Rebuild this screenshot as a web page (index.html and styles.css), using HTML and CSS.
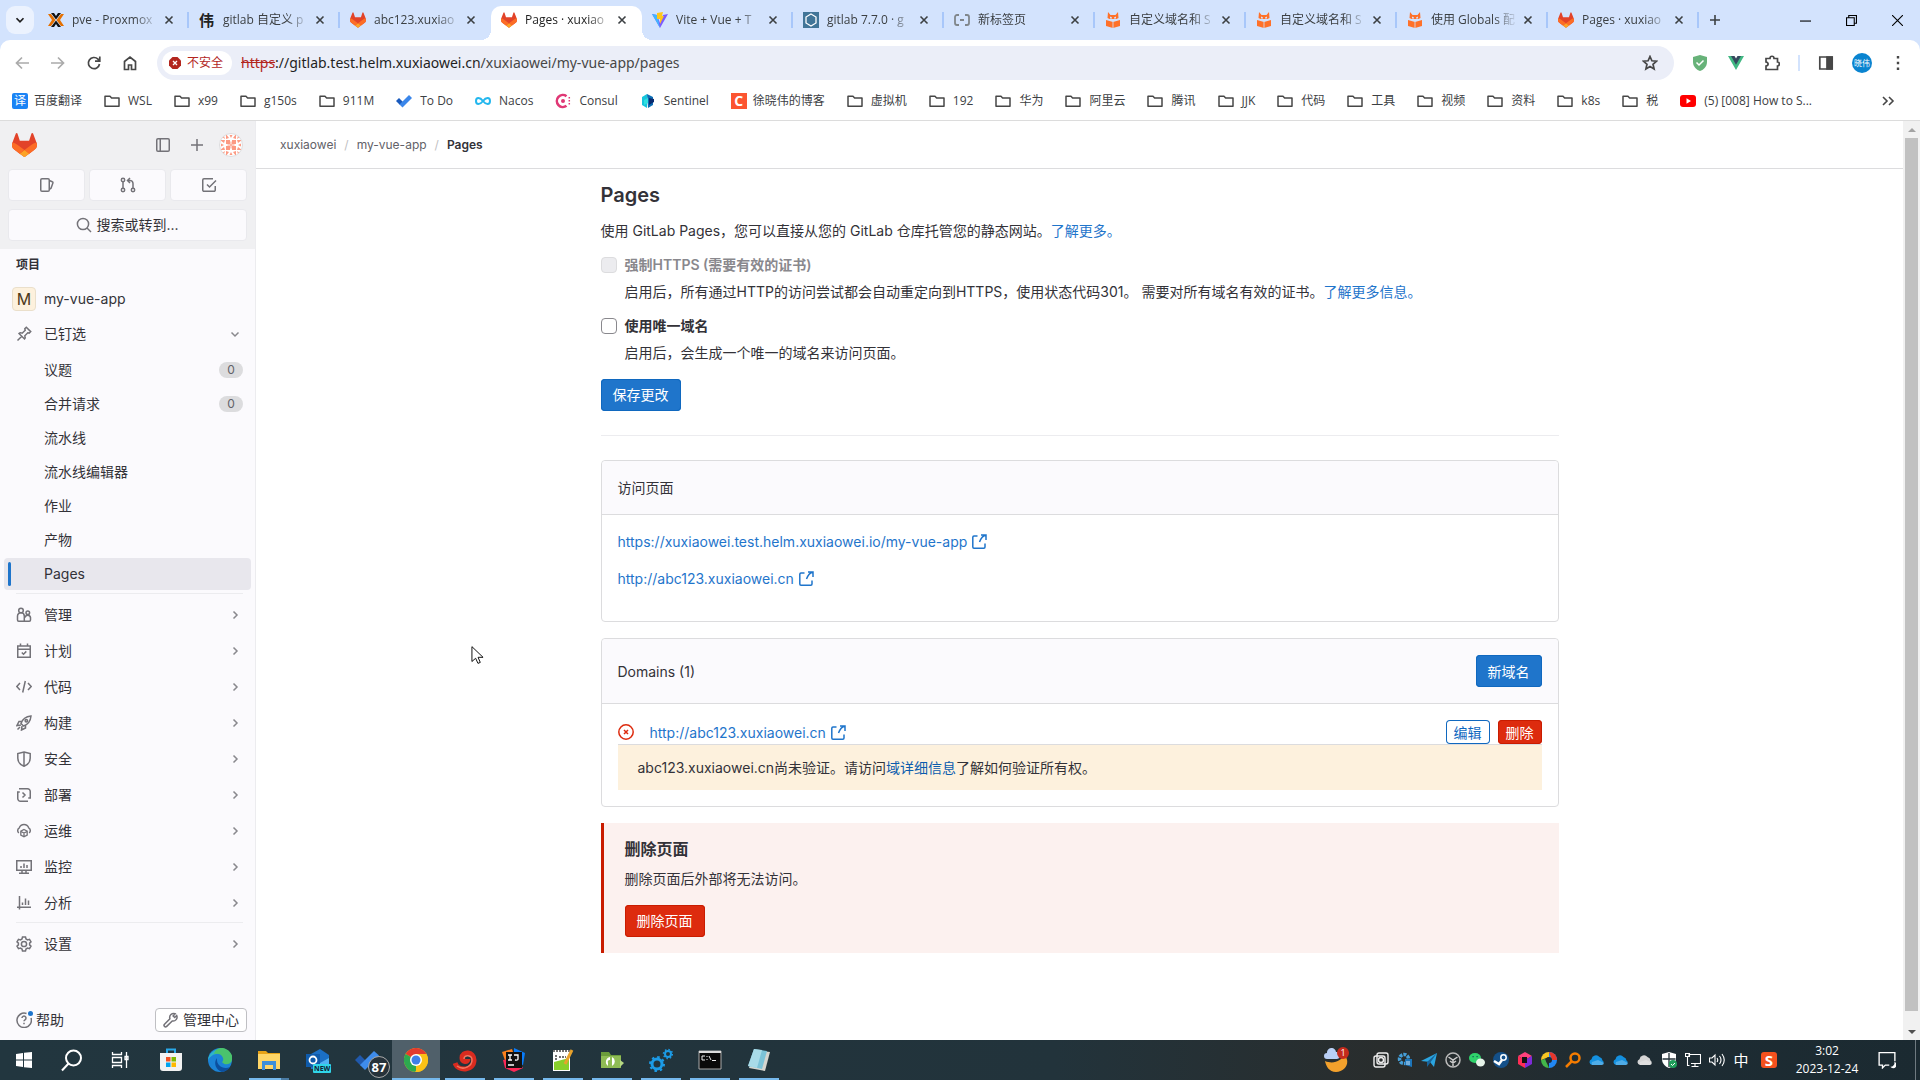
FILE: index.html
```html
<!DOCTYPE html>
<html lang="zh-CN">
<head>
  <meta charset="UTF-8">
  <title>Pages · xuxiaowei / my-vue-app · GitLab</title>
  <link rel="stylesheet" href="styles.css">
</head>
<body>
  <!-- icon sprite -->
  <svg class="sprite" aria-hidden="true">
    <symbol id="tanuki" viewBox="0 0 25 24">
      <path fill="#e24329" d="m24.507 9.5-.034-.09L21.082.562a.896.896 0 0 0-1.694.091l-2.29 7.01H7.825L5.535.653a.898.898 0 0 0-1.694-.09L.451 9.411.416 9.5a6.297 6.297 0 0 0 2.09 7.278l.042.032 5.16 3.867 2.56 1.935 1.554 1.176a1.051 1.051 0 0 0 1.268 0l1.555-1.176 2.56-1.935 5.211-3.9A6.297 6.297 0 0 0 24.507 9.5Z"/>
      <path fill="#fc6d26" d="m24.507 9.5-.034-.09a11.44 11.44 0 0 0-4.56 2.051l-7.447 5.632 4.742 3.584 5.211-3.9A6.297 6.297 0 0 0 24.507 9.5Z"/>
      <path fill="#fca326" d="m7.707 20.677 2.56 1.935 1.555 1.176a1.051 1.051 0 0 0 1.268 0l1.555-1.176 2.56-1.935-4.743-3.584-4.755 3.584Z"/>
      <path fill="#fc6d26" d="M5.01 11.461a11.43 11.43 0 0 0-4.56-2.05L.416 9.5a6.297 6.297 0 0 0 2.09 7.278l.042.032 5.16 3.867 4.745-3.584-7.443-5.632Z"/>
    </symbol>
    <symbol id="close" viewBox="0 0 16 16"><path d="M4.5 4.5l7 7M11.5 4.5l-7 7" stroke="#3c4043" stroke-width="1.6"/></symbol>
    <symbol id="folder" viewBox="0 0 16 16"><path d="M1 3.2h5l1.6 1.7H15v8.4H1z" fill="none" stroke="#474747" stroke-width="1.5" stroke-linejoin="round"/></symbol>
    <symbol id="fox" viewBox="0 0 16 16"><path fill="#ff7129" d="M3 0l2.5 3h5L13 0l.5 6-2 1h-7l-2-1zM1 8l7 2 7-2v6l-7 2-7-2z"/><path fill="#d3e3fd" d="M5 4.500l2 1v1H5zM11 4.500l-2 1v1h2zM7.600 10h.8v6h-.8z"/></symbol>
    <symbol id="external" viewBox="0 0 16 16"><path d="M6.5 2H3a1.2 1.2 0 0 0-1.2 1.2V13A1.2 1.2 0 0 0 3 14.2h9.8A1.2 1.2 0 0 0 14 13V9.5M10 1h5v5M15 1c-2.500.5-5 3-6.500 7"/></symbol>
    <symbol id="right" viewBox="0 0 16 16"><path d="M6.5 4.5L10 8l-3.5 3.5"/></symbol>
    <symbol id="cloud" viewBox="0 0 16 16"><path d="M3 13a3 3 0 0 1-.5-5.800A4.500 4.500 0 0 1 10.500 5a4 4 0 0 1 3 3.500A2.500 2.500 0 0 1 13 13z"/><path fill="#fff" fill-opacity=".25" d="M3 13a3 3 0 0 1 0-3l6-2 6 3a2 2 0 0 1-2 2z"/></symbol>
  </svg>

  <header class="browser">
    <div class="tabstrip">
      <button class="tab-search" aria-label="搜索标签页"><svg viewBox="0 0 16 16"><path d="M4 6l4 4 4-4" fill="none" stroke="#1f1f1f" stroke-width="2"/></svg></button>
      <div class="tab">
        <svg class="favicon" viewBox="0 0 16 16"><path fill="#e57000" d="M0 2h3l4.500 6L3 14H0l4-6zM16 2h-3L8.500 8l4.500 6h3l-4-6z"/><path fill="#111" d="M3 1h3l2 3 2-3h3L8 7.500zM3 15h3l2-3 2 3h3L8 8.500z"/></svg>
        <span class="tab-title">pve - Proxmox</span><button class="tab-close" aria-label="关闭"><svg><use href="#close"/></svg></button>
      </div>
      <div class="tab">
        <span class="favicon glyph-wei">伟</span>
        <span class="tab-title">gitlab 自定义 p</span><button class="tab-close" aria-label="关闭"><svg><use href="#close"/></svg></button>
      </div>
      <div class="tab no-sep">
        <svg class="favicon"><use href="#tanuki"/></svg>
        <span class="tab-title">abc123.xuxiao</span><button class="tab-close" aria-label="关闭"><svg><use href="#close"/></svg></button>
      </div>
      <div class="tab active">
        <svg class="favicon"><use href="#tanuki"/></svg>
        <span class="tab-title">Pages · xuxiao</span><button class="tab-close" aria-label="关闭"><svg><use href="#close"/></svg></button>
      </div>
      <div class="tab">
        <svg class="favicon" viewBox="0 0 16 16"><path fill="#7a5cff" d="M0 2l8 14 8-14-5 1-3 8-3-8z"/><path fill="#41b8ff" d="M0 2l8 14-2-9-1-4z"/><path fill="#ffc61c" d="M5 1l6-1-1 4h2l-4 8V7H5z"/></svg>
        <span class="tab-title">Vite + Vue + T</span><button class="tab-close" aria-label="关闭"><svg><use href="#close"/></svg></button>
      </div>
      <div class="tab">
        <svg class="favicon" viewBox="0 0 16 16"><path fill="#417598" d="M0 0h16v16H0z"/><path fill="none" stroke="#fff" stroke-width="1.3" d="M8 2l5 3v6l-5 3-5-3V5z"/></svg>
        <span class="tab-title">gitlab 7.7.0 · g</span><button class="tab-close" aria-label="关闭"><svg><use href="#close"/></svg></button>
      </div>
      <div class="tab">
        <svg class="favicon" viewBox="0 0 16 16"><path fill="none" stroke="#80868b" stroke-width="1.8" d="M5 3H3a2 2 0 0 0-2 2v6a2 2 0 0 0 2 2h2M11 3h2a2 2 0 0 1 2 2v6a2 2 0 0 1-2 2h-2M6 8h4"/></svg>
        <span class="tab-title">新标签页</span><button class="tab-close" aria-label="关闭"><svg><use href="#close"/></svg></button>
      </div>
      <div class="tab">
        <svg class="favicon"><use href="#fox"/></svg>
        <span class="tab-title">自定义域名和 S</span><button class="tab-close" aria-label="关闭"><svg><use href="#close"/></svg></button>
      </div>
      <div class="tab">
        <svg class="favicon"><use href="#fox"/></svg>
        <span class="tab-title">自定义域名和 S</span><button class="tab-close" aria-label="关闭"><svg><use href="#close"/></svg></button>
      </div>
      <div class="tab">
        <svg class="favicon"><use href="#fox"/></svg>
        <span class="tab-title">使用 Globals 配</span><button class="tab-close" aria-label="关闭"><svg><use href="#close"/></svg></button>
      </div>
      <div class="tab">
        <svg class="favicon"><use href="#tanuki"/></svg>
        <span class="tab-title">Pages · xuxiao</span><button class="tab-close" aria-label="关闭"><svg><use href="#close"/></svg></button>
      </div>
      <button class="new-tab" aria-label="新建标签页"><svg viewBox="0 0 16 16"><path d="M8 3v10M3 8h10" stroke="#3c4043" stroke-width="1.6"/></svg></button>
      <div class="window-controls">
        <button aria-label="最小化"><svg viewBox="0 0 10 10"><path d="M0 5.500h10"/></svg></button>
        <button aria-label="还原"><svg viewBox="0 0 10 10"><path d="M.5 2.500h7v7h-7zM2.500 2.500v-2h7v7h-2"/></svg></button>
        <button aria-label="关闭窗口"><svg viewBox="0 0 10 10"><path d="M0 0l10 10M10 0L0 10"/></svg></button>
      </div>
    </div>

    <div class="toolbar">
      <button class="tool" aria-label="后退"><svg class="muted" viewBox="0 0 16 16"><path d="M15 8H2.500M8 2.500L2.500 8 8 13.500"/></svg></button>
      <button class="tool" aria-label="前进"><svg class="muted" viewBox="0 0 16 16"><path d="M1 8h12.500M8 2.500L13.500 8 8 13.500"/></svg></button>
      <button class="tool" aria-label="重新加载"><svg viewBox="0 0 16 16"><path d="M13.500 9A5.600 5.600 0 1 1 12 4.200L13.500 5.700M13.800 1.500v4.700H9"/></svg></button>
      <button class="tool" aria-label="主页"><svg viewBox="0 0 16 16"><path d="M2.500 6.500L8 2l5.500 4.500v8h-4V10h-3v4.500h-4z"/></svg></button>
      <div class="omnibox">
        <button class="chip"><svg viewBox="0 0 12 12"><path fill="#b3261e" d="M3.500 0h5L12 3.500v5L8.500 12h-5L0 8.500v-5z"/><path stroke="#fff" stroke-width="1.3" d="M4 4l4 4M8 4L4 8"/></svg>不安全</button>
        <div class="url" role="textbox" aria-label="地址栏"><s>https</s><span class="host">://gitlab.test.helm.xuxiaowei.cn</span>/xuxiaowei/my-vue-app/pages</div>
        <svg class="star" viewBox="0 0 16 16"><path d="M8 1.500l1.900 4.300 4.700.4-3.600 3.100 1.100 4.600L8 11.500l-4.100 2.400L5 9.300 1.400 6.200l4.700-.4z"/></svg>
      </div>
      <div class="extensions">
        <svg viewBox="0 0 16 16"><path fill="#67b279" d="M8 0l7 2v5c0 5-4 8-7 9-3-1-7-4-7-9V2z"/><path d="M4.500 7.500L7 10l4.500-4.500" stroke="#fff" stroke-width="1.5" fill="none"/></svg>
        <svg viewBox="0 0 16 16"><path fill="#41b883" d="M0 1h4l4 7 4-7h4L8 15z"/><path fill="#35495e" d="M3 1h3.500L8 3.500 9.500 1H13L8 9.800z"/></svg>
        <svg class="line" viewBox="0 0 16 16"><path d="M2 3.500h4c0-3 4-3 4 0h3.500V7c2.500.2 2.500 3.800 0 4v3.500H2V11c2.800-.4 2.800-3.600 0-4z"/></svg>
        <span class="ext-sep"></span>
        <svg class="line" viewBox="0 0 16 16"><path d="M1.800 2h12.400v12H1.800z"/><path fill="#474747" d="M9 2h5v12H9z"/></svg>
        <span class="profile">晓伟</span>
        <svg viewBox="0 0 16 16"><path fill="#474747" d="M6.800 1h2.400v2.400H6.800zM6.800 6.800h2.400v2.400H6.800zM6.800 12.600h2.400V15H6.800z"/></svg>
      </div>
    </div>

    <nav class="bookmarks">
      <a href="#"><span class="bm-icon baidu">译</span>百度翻译</a>
      <a href="#"><svg class="bm-icon"><use href="#folder"/></svg>WSL</a>
      <a href="#"><svg class="bm-icon"><use href="#folder"/></svg>x99</a>
      <a href="#"><svg class="bm-icon"><use href="#folder"/></svg>g150s</a>
      <a href="#"><svg class="bm-icon"><use href="#folder"/></svg>911M</a>
      <a href="#"><svg class="bm-icon" viewBox="0 0 16 16"><path fill="#195abd" d="M0 8l3-3 4 4-3 3z"/><path fill="#3a86ea" d="M3.500 11.500L13 2l3 3-9.500 9.500z"/></svg>To Do</a>
      <a href="#"><svg class="bm-icon" viewBox="0 0 16 16"><path fill="none" stroke="#23b7ee" stroke-width="2" d="M8 8C5 4 1 4 1 8s4 4 7 0 7-4 7 0-4 4-7 0z"/></svg>Nacos</a>
      <a href="#"><svg class="bm-icon" viewBox="0 0 16 16"><path fill="none" stroke="#e03875" stroke-width="2.6" d="M11.500 3.200A6 6 0 1 0 11.500 12.800"/><circle cx="8" cy="8" r="2" fill="#e03875"/><path stroke="#e03875" stroke-width="1.5" stroke-dasharray="1.5 1.5" d="M14.300 4v9"/></svg>Consul</a>
      <a href="#"><svg class="bm-icon" viewBox="0 0 16 16"><path fill="#15c5dc" d="M2 4l5-3v14l-5-3z"/><path fill="#0b6db5" d="M7 1l6 3v8l-5 3z"/><path fill="#2fe0e0" d="M4 7l4-2v5l-4 2z"/><path fill="#0a2c70" d="M9 5l5 1v3l-5 3z"/></svg>Sentinel</a>
      <a href="#"><span class="bm-icon csdn">C</span>徐晓伟的博客</a>
      <a href="#"><svg class="bm-icon"><use href="#folder"/></svg>虚拟机</a>
      <a href="#"><svg class="bm-icon"><use href="#folder"/></svg>192</a>
      <a href="#"><svg class="bm-icon"><use href="#folder"/></svg>华为</a>
      <a href="#"><svg class="bm-icon"><use href="#folder"/></svg>阿里云</a>
      <a href="#"><svg class="bm-icon"><use href="#folder"/></svg>腾讯</a>
      <a href="#"><svg class="bm-icon"><use href="#folder"/></svg>JJK</a>
      <a href="#"><svg class="bm-icon"><use href="#folder"/></svg>代码</a>
      <a href="#"><svg class="bm-icon"><use href="#folder"/></svg>工具</a>
      <a href="#"><svg class="bm-icon"><use href="#folder"/></svg>视频</a>
      <a href="#"><svg class="bm-icon"><use href="#folder"/></svg>资料</a>
      <a href="#"><svg class="bm-icon"><use href="#folder"/></svg>k8s</a>
      <a href="#"><svg class="bm-icon"><use href="#folder"/></svg>税</a>
      <a href="#"><svg class="bm-icon" viewBox="0 0 16 16"><rect y="2" width="16" height="12" rx="3" fill="#f00"/><path fill="#fff" d="M6.500 5.200v5.600L11 8z"/></svg>(5) [008] How to S...</a>
      <button class="more" aria-label="更多书签"><svg viewBox="0 0 16 16"><path d="M3 4l4 4-4 4M9 4l4 4-4 4" fill="none" stroke="#474747" stroke-width="1.6"/></svg></button>
    </nav>
  </header>

  <div class="page">
    <aside class="sidebar">
      <div class="super-top">
        <div class="user-bar">
          <a href="#" class="logo" aria-label="主页"><svg><use href="#tanuki"/></svg></a>
          <button aria-label="侧边栏"><svg class="icon" viewBox="0 0 16 16"><rect x="1.75" y="1.75" width="12.5" height="12.5" rx="1.25"/><path d="M5.250 2v12"/></svg></button>
          <button aria-label="新建"><svg class="icon" viewBox="0 0 16 16"><path d="M8 2v12M2 8h12"/></svg></button>
          <button class="avatar" aria-label="用户"><svg viewBox="0 0 24 24">
            <path fill="#fc9a83" d="M7 7h4v4H7zM13 7h4v4h-4zM7 13h4v4H7zM13 13h4v4h-4zM11.500 8.500h1v7h-1zM8.500 11.500h7v1h-7zM7 1l3 4-3 1zM17 1l-3 4 3 1zM7 23l3-4-3-1zM17 23l-3-4 3-1zM1 7l4 3 1-3zM1 17l4-3 1 3zM23 7l-4 3-1-3zM23 17l-4-3-1 3zM10.500 2h3L12 5zM10.500 22h3L12 19zM2 10.500v3L5 12zM22 10.500v3L19 12zM3 4l2-1 1 3zM21 4l-2-1-1 3zM3 20l2 1 1-3zM21 20l-2 1-1-3z"/></svg></button>
        </div>
        <div class="counters">
          <button aria-label="议题"><svg class="icon" viewBox="0 0 16 16"><rect x="1.75" y="1.75" width="8.5" height="12.5" rx="1.25"/><path d="M10.300 3.500l3 1.200a1 1 0 0 1 .6 1.300L12 11.200l-1.700 1.300"/></svg></button>
          <button aria-label="合并请求"><svg class="icon" viewBox="0 0 16 16"><circle cx="3" cy="3" r="1.7"/><circle cx="3" cy="13" r="1.7"/><circle cx="13" cy="13" r="1.7"/><path d="M3 4.800v6.400M13 11.200V6.500A3 3 0 0 0 10 3.500H8M10 1L7.500 3.500 10 6"/></svg></button>
          <button aria-label="待办事项"><svg class="icon" viewBox="0 0 16 16"><path d="M12 1.750H3a1.250 1.250 0 0 0-1.250 1.250v10A1.250 1.250 0 0 0 3 14.250h10A1.250 1.250 0 0 0 14.250 13V9M6 7.500L8.500 10 15 3.500"/></svg></button>
        </div>
        <button class="search"><svg class="icon" viewBox="0 0 16 16"><circle cx="7" cy="7" r="5.600"/><path d="M11 11l4 4"/></svg>搜索或转到...</button>
      </div>

      <nav class="side-nav">
        <h2>项目</h2>
        <a href="#" class="row project"><span class="letter">M</span>my-vue-app</a>
        <a href="#" class="row pinned"><svg class="icon" viewBox="0 0 16 16"><path d="M1.500 14.500l4.300-4.300M3 7.500l5.500 5.500c.9-1 .8-2.200.3-3.200l3-3 1.400.3 1.500-1.500L10.300 1.200 8.800 2.700l.4 1.500-3 3c-1-.5-2.300-.6-3.200.3z"/></svg><span>已钉选</span><svg class="icon arrow down"><use href="#right"/></svg></a>
        <ul class="pins">
          <li><a href="#" class="row">议题<span class="badge">0</span></a></li>
          <li><a href="#" class="row">合并请求<span class="badge">0</span></a></li>
          <li><a href="#" class="row">流水线</a></li>
          <li><a href="#" class="row">流水线编辑器</a></li>
          <li><a href="#" class="row">作业</a></li>
          <li><a href="#" class="row">产物</a></li>
          <li><a href="#" class="row current">Pages</a></li>
        </ul>
        <ul class="sections">
          <li><a href="#" class="row"><svg class="icon" viewBox="0 0 16 16"><circle cx="5" cy="3.500" r="2.300"/><path d="M1.500 13V9a3.300 3.300 0 0 1 3.500-3.200A3.300 3.300 0 0 1 8.300 9v5.200H2.700A1.200 1.200 0 0 1 1.500 13z"/><circle cx="11.800" cy="5.800" r="1.800"/><path d="M8.300 14.200h5A1.200 1.200 0 0 0 14.500 13v-2.500a2.800 2.800 0 0 0-5.500 0"/></svg>管理<svg class="icon arrow"><use href="#right"/></svg></a></li>
          <li><a href="#" class="row"><svg class="icon" viewBox="0 0 16 16"><path d="M1.750 3h12.500v11.250H1.750zM1.750 6.200h12.500M4.500.5V3M11.500.5V3M5.800 9.500l1.700 1.700 2.800-2.800"/></svg>计划<svg class="icon arrow"><use href="#right"/></svg></a></li>
          <li><a href="#" class="row"><svg class="icon" viewBox="0 0 16 16"><path d="M4 4L.8 7.500 4 11M12 4l3.200 3.500L12 11M9.300 2L6.700 13.500"/></svg>代码<svg class="icon arrow"><use href="#right"/></svg></a></li>
          <li><a href="#" class="row"><svg class="icon" viewBox="0 0 16 16"><path d="M5 8.500C6.500 4 9.500 1.500 15 1c-.5 5.500-3 8.500-7.500 10zM5.800 6.500H3L1 10.500l4-.5M9.500 10.200V13l-4 2 .5-4M1.500 14.500L4 12"/><circle cx="10.300" cy="5.700" r="1.200"/></svg>构建<svg class="icon arrow"><use href="#right"/></svg></a></li>
          <li><a href="#" class="row"><svg class="icon" viewBox="0 0 16 16"><path d="M8 .9l6.200 1.600v4.700c0 4-2.500 6.600-6.200 8-3.700-1.400-6.200-4-6.200-8V2.500zM8 1v14"/></svg>安全<svg class="icon arrow"><use href="#right"/></svg></a></li>
          <li><a href="#" class="row"><svg class="icon" viewBox="0 0 16 16"><path d="M3 1.750h8.500a2.750 2.750 0 0 1 2.750 2.750V11h-2M12 14.250H4.500a2.750 2.750 0 0 1-2.750-2.750V5h2M6.500 5.500L9 8l-2.500 2.500"/></svg>部署<svg class="icon arrow"><use href="#right"/></svg></a></li>
          <li><a href="#" class="row"><svg class="icon" viewBox="0 0 16 16"><path d="M2.800 10A3.200 3.200 0 0 1 3.300 4.800a5 5 0 0 1 9.400 0 3.200 3.200 0 0 1 .5 5.200"/><path stroke-width="1.3" d="M8 6.500l3.200 1.700v3.800L8 13.800 4.800 12V8.200zM5 8.500l3 1.600 3-1.600M8 10.100v3.500"/></svg>运维<svg class="icon arrow"><use href="#right"/></svg></a></li>
          <li><a href="#" class="row"><svg class="icon" viewBox="0 0 16 16"><path d="M.75 1.750h14.500v9.500H.75zM6 11.500v2.700M10 11.500v2.700M3 14.250h10M5 7v2M8 4.500V9M11 6v3"/></svg>监控<svg class="icon arrow"><use href="#right"/></svg></a></li>
          <li><a href="#" class="row"><svg class="icon" viewBox="0 0 16 16"><path d="M3.500 1v13.500M1 12.250h14M6.500 7.500V10M9.500 3.500V10M12.500 5.500V10"/></svg>分析<svg class="icon arrow"><use href="#right"/></svg></a></li>
        </ul>
        <ul class="sections">
          <li><a href="#" class="row"><svg class="icon" viewBox="0 0 16 16"><path d="M6.500 1h3l.5 2 1.500.9 2-.6 1.500 2.600L13.600 7.200v1.600l1.400 1.300-1.500 2.600-2-.6-1.500.9-.5 2h-3L6 13l-1.500-.9-2 .6L1 10.100l1.400-1.300V7.200L1 5.900l1.500-2.600 2 .6L6 3z"/><circle cx="8" cy="8" r="2.600"/></svg>设置<svg class="icon arrow"><use href="#right"/></svg></a></li>
        </ul>
      </nav>

      <div class="side-footer">
        <button class="help"><svg class="icon" viewBox="0 0 16 16"><path d="M10.500 1.500A7.200 7.200 0 1 0 15 6M6 6a2 2 0 1 1 3 1.800c-.7.400-1 .7-1 1.500M8 10.800v1.400"/></svg><i class="dot"></i>帮助</button>
        <button class="admin"><svg class="icon" viewBox="0 0 16 16"><path d="M13.700 3.500l-2 2-1.600-1.600 2-2.200a4 4 0 0 0-5.200 5L1.500 12.200a1.500 1.500 0 0 0 2.200 2.200L9.200 9a4 4 0 0 0 4.500-5.500z"/></svg>管理中心</button>
      </div>
    </aside>

    <main class="content">
      <nav class="breadcrumbs">
        <a href="#">xuxiaowei</a><span>/</span><a href="#">my-vue-app</a><span>/</span><a href="#" class="here">Pages</a>
      </nav>

      <div class="container">
        <h1>Pages</h1>
        <p class="intro">使用 GitLab Pages，您可以直接从您的 GitLab 仓库托管您的静态网站。<a href="#">了解更多。</a></p>
        <form>
          <div class="field">
            <input type="checkbox" id="force-https" disabled>
            <label for="force-https">强制HTTPS (需要有效的证书)</label>
            <p>启用后，所有通过HTTP的访问尝试都会自动重定向到HTTPS，使用状态代码301。 需要对所有域名有效的证书。<a href="#">了解更多信息。</a></p>
          </div>
          <div class="field">
            <input type="checkbox" id="unique-domain">
            <label for="unique-domain">使用唯一域名</label>
            <p>启用后，会生成一个唯一的域名来访问页面。</p>
          </div>
          <button type="button" class="btn confirm">保存更改</button>
        </form>
        <hr>

        <section class="card">
          <div class="card-header">访问页面</div>
          <div class="card-body links">
            <p><a href="#">https://xuxiaowei.test.helm.xuxiaowei.io/my-vue-app <svg class="icon"><use href="#external"/></svg></a></p>
            <p><a href="#">http://abc123.xuxiaowei.cn <svg class="icon"><use href="#external"/></svg></a></p>
          </div>
        </section>

        <section class="card">
          <div class="card-header">Domains (1)<button class="btn confirm">新域名</button></div>
          <div class="card-body">
            <div class="domain">
              <svg class="icon failed" viewBox="0 0 16 16"><circle cx="8" cy="8" r="7.200"/><path d="M6 6l4 4M10 6l-4 4"/></svg>
              <a href="#">http://abc123.xuxiaowei.cn <svg class="icon"><use href="#external"/></svg></a>
              <button class="btn small outline">编辑</button>
              <button class="btn small danger">删除</button>
            </div>
            <div class="warning">abc123.xuxiaowei.cn尚未验证。请访问<a href="#">域详细信息</a>了解如何验证所有权。</div>
          </div>
        </section>

        <section class="remove">
          <h4>删除页面</h4>
          <p>删除页面后外部将无法访问。</p>
          <button class="btn danger">删除页面</button>
        </section>
      </div>
    </main>

    <div class="scrollbar"><span class="up"></span><span class="thumb"></span><span class="down"></span></div>
  </div>

  <footer class="taskbar">
    <button aria-label="开始"><svg viewBox="0 0 24 24"><path fill="#fff" d="M4 6l7-1v6.500H4zM12 4.800L20 4v7.500h-8zM4 12.500h7V19l-7-1zM12 12.500h8V20l-8-.8z"/></svg></button>
    <button aria-label="搜索"><svg viewBox="0 0 24 24"><circle cx="13.500" cy="10" r="7.500" fill="none" stroke="#fff" stroke-width="2"/><path d="M8.500 15.500L2 22.500" stroke="#fff" stroke-width="2"/></svg></button>
    <button aria-label="任务视图"><svg viewBox="0 0 24 24"><path d="M4.500 4v2.500h9V4M4.500 20v-2.500h9V20M4.500 9.500h9v5h-9zM18.500 4v16M17 8.500h3v3h-3z" fill="none" stroke="#fff" stroke-width="1.3"/></svg></button>
    <button class="app first" aria-label="Microsoft Store"><svg viewBox="0 0 24 24"><path d="M8 6V1.500h8V6" fill="none" stroke="#29a9ea" stroke-width="2"/><path fill="#f2f2f2" d="M1 5h22v15a3 3 0 0 1-3 3H4a3 3 0 0 1-3-3z"/><path fill="#f25022" d="M7 9h4.500v4.500H7z"/><path fill="#7fba00" d="M12.500 9H17v4.500h-4.500z"/><path fill="#00a4ef" d="M7 14.500h4.500V19H7z"/><path fill="#ffb900" d="M12.500 14.500H17V19h-4.500z"/></svg></button>
    <button class="app" aria-label="Edge"><svg viewBox="0 0 24 24"><circle cx="12" cy="12" r="12" fill="#1b83d6"/><path fill="#2eb5c9" d="M0 12C1 2 14-2 20 3l-4 5C12 4 4 5 0 12z"/><path fill="#4ac36d" d="M12 0c7-1 14 6 12 12-1 5-7 5-9 3-2-1 1-2 0-5-1-4-5-5-9-4C7 2 9 1 12 0z"/><path fill="#0c4f9e" d="M9 10c-4 5-1 12 5 14 4-.5 7-3 8-5-6 3-14-1-13-9z"/></svg></button>
    <button class="app open stacked" aria-label="资源管理器"><svg viewBox="0 0 24 24"><path fill="#e8a317" d="M1 3h8l2 2h12v4H1z"/><path fill="#ffd667" d="M1 6h22v15H1z"/><path fill="#3d8fd9" d="M5 13h14v9h-3v-5H8v5H5z"/></svg></button>
    <button class="app" aria-label="Outlook"><svg viewBox="0 0 24 24"><path fill="#1b6fc4" d="M5 6l9-5 9 6v14H5z"/><path fill="#50b3f2" d="M7 11l7 4 9-5v10H7z"/><path fill="#0f5bab" d="M0 6h14v13H0z"/><circle cx="7" cy="12" r="3.500" fill="none" stroke="#fff" stroke-width="1.8"/></svg><span class="new">NEW</span></button>
    <button class="app" aria-label="To Do"><svg viewBox="0 0 24 24"><path fill="#2059ac" d="M0 12l5-5 6 6-5 5z"/><path fill="#3e8cec" d="M5 17L19 3l5 4.500L10 22z"/></svg><span class="count">87</span></button>
    <button class="app open focused" aria-label="Chrome"><svg viewBox="0 0 24 24"><circle cx="12" cy="12" r="12" fill="#fbc116"/><path fill="#e33b2e" d="M12 12L1.600 6a12 12 0 0 1 20.800 0z"/><path fill="#2da94f" d="M12 12v12A12 12 0 0 1 1.600 6z"/><path fill="#fbc116" d="M12 6h10.400A12 12 0 0 1 11 24l6-9z"/><circle cx="12" cy="12" r="6" fill="#fff"/><circle cx="12" cy="12" r="4.500" fill="#3f7fe8"/></svg></button>
    <button class="app open" aria-label="终端"><svg viewBox="0 0 24 24"><path fill="none" stroke="#d92b1f" stroke-width="5" d="M2 15c3 9 19 8 19-3 0-9-12-9-12-2 0 4 6 5 6 1"/><path fill="none" stroke="#f4755f" stroke-width="1.5" d="M4 18c7 5 15 0 15-6 0-5-8-6-8-1"/></svg></button>
    <button class="app open" aria-label="IntelliJ IDEA"><svg viewBox="0 0 24 24"><path fill="#fc801d" d="M0 4l10-3 4 12-8 8z"/><path fill="#087cfa" d="M12 0l11 5-2 12-9-3z"/><path fill="#fe2857" d="M1 12l12-2 8 10-9 4-9-4z"/><path fill="#111" d="M4 4h16v16H4z"/><path stroke="#fff" stroke-width="1.3" fill="none" d="M6 7h4M8 7v5M6 12h4M12 7h4v4q0 1.500-3 1M6 17h6"/></svg></button>
    <button class="app open" aria-label="Notepad++"><svg viewBox="0 0 24 24"><path fill="#fff" d="M2 2h17v21H2z"/><path fill="#88cf2b" d="M3 14l15-4v12H3z"/><path stroke="#444" stroke-width="1.5" stroke-dasharray="2 1" d="M2 3h17M5 7v5M8 9h7"/><path stroke="#e8a22c" stroke-width="3" d="M21 2l-7 14"/></svg></button>
    <button class="app open" aria-label="文件同步"><svg viewBox="0 0 24 24"><path fill="#6c9c3c" d="M1 4h8l2 3h10v13H1z"/><path fill="#8fbc55" d="M1 8h20v12H1z"/><path fill="#fff" d="M10 9a5 5 0 0 0-2 9v-3a2 2 0 0 1 2-3zM12 9v9a5 5 0 0 0 0-9z"/><path fill="#b5d883" d="M20 12l4 3-4 4z"/></svg></button>
    <button class="app open" aria-label="服务"><svg viewBox="0 0 24 24"><g fill="none" stroke="#1c9be6"><circle cx="8" cy="16" r="5" stroke-width="3"/><circle cx="8" cy="16" r="7" stroke-width="2" stroke-dasharray="2.5 3"/><circle cx="19" cy="6" r="3" stroke-width="2"/><circle cx="19" cy="6" r="4.500" stroke-width="1.5" stroke-dasharray="1.5 2"/></g></svg></button>
    <button class="app open" aria-label="命令提示符"><svg viewBox="0 0 24 24"><path fill="#0a0a0a" stroke="#aaa" d="M1 3h22v18H1z"/><path fill="#ddd" d="M1 3h22v2H1z"/><path stroke="#eee" fill="none" d="M7 8H4v4h3M9 8v1M9 11v1M11 8l2 4M14 12.500h4"/></svg></button>
    <button class="app open" aria-label="记事本"><svg viewBox="0 0 24 24"><path fill="#d5d5cf" d="M8 2l15 2-5 19-16-3z"/><path fill="#7cc3d8" d="M7 1l13 2-5 18-14-3z"/><path fill="#a9dbe8" d="M7 1l8 1-5 18-9-2z"/></svg></button>

    <div class="tray">
      <span class="weather"><svg viewBox="0 0 24 24"><path fill="#f3a12c" d="M1 13c9 4 17-1 19-6 7 6 2 17-8 17C5 24 2 18 1 13z"/><path fill="#b9cff5" d="M3 11a3 3 0 0 1 0-6 4.500 4.500 0 0 1 9-1 3.500 3.500 0 0 1 1 7z"/></svg><b>1</b></span>
      <svg viewBox="0 0 16 16"><g fill="none" stroke="#eee" stroke-width="1.4"><rect x="4" y="1" width="11" height="11" rx="2"/><rect x="1" y="4" width="11" height="11" rx="2"/><circle cx="8" cy="8" r="2.500"/></g></svg>
      <svg viewBox="0 0 16 16"><circle cx="7" cy="7" r="4.500" fill="none" stroke="#459fd8" stroke-width="3.500" stroke-dasharray="3 1"/><path fill="#1d76bb" d="M8 7l7 0v8l-7-2z"/><path d="M9 10h4M9 12h4" stroke="#cfe6f7"/></svg>
      <svg viewBox="0 0 16 16"><path fill="#2ba5e0" d="M0 9l16-8-3 14-4-5z"/><path fill="#17649b" d="M16 1L6 10v5l3-4z"/></svg>
      <svg viewBox="0 0 16 16"><circle cx="8" cy="8" r="7" fill="none" stroke="#bbb" stroke-width="1.5"/><path d="M8 14V7M3.500 5l4.500 3 4.500-3M5 9l3 2 3-2" fill="none" stroke="#ccc" stroke-width="1.5"/></svg>
      <svg viewBox="0 0 16 16"><ellipse cx="6" cy="6" rx="6" ry="5" fill="#2fd36b"/><ellipse cx="11.500" cy="10.500" rx="4.500" ry="4" fill="#e6f3e9"/><path fill="#155" d="M3.500 4h1.200v1.200H3.500zM7.500 4h1.200v1.200H7.500z"/></svg>
      <svg viewBox="0 0 16 16"><circle cx="8" cy="8" r="8" fill="#145089"/><circle cx="10.500" cy="5.500" r="2.700" fill="none" stroke="#fff" stroke-width="1.5"/><path d="M1 9l5 3 3-4" stroke="#fff" stroke-width="2.5" fill="none"/></svg>
      <svg viewBox="0 0 16 16"><path fill="#ff417d" d="M8 0l7 4-7 4-7-4z"/><path fill="#7e2bd9" d="M15 4v8l-7 4V8z"/><path fill="#ff2d55" d="M1 4l7 4v8l-7-4z"/><path fill="#111" d="M5 5h5v6H5z"/></svg>
      <svg viewBox="0 0 16 16"><path fill="#2187f3" d="M8 0a8 8 0 0 1 0 16z"/><path fill="#e8372b" d="M8 0a8 8 0 0 1 8 8h-5z"/><path fill="#43b649" d="M8 16a8 8 0 0 1-8-8l4-1z"/><path fill="#f9c523" d="M0 8a8 8 0 0 1 8-8v5z"/><circle cx="8" cy="8" r="3" fill="#202b30"/></svg>
      <svg viewBox="0 0 16 16"><circle cx="10" cy="6" r="4.500" fill="none" stroke="#f57c00" stroke-width="2.5"/><path d="M7 9l-6 6" stroke="#f57c00" stroke-width="2.5"/></svg>
      <svg class="onedrive"><use href="#cloud"/></svg>
      <svg class="onedrive"><use href="#cloud"/></svg>
      <svg class="onedrive offline"><use href="#cloud"/></svg>
      <svg viewBox="0 0 16 16"><path fill="#fff" d="M8 0l7 2v5c0 5-4 8-7 9-3-1-7-4-7-9V2z"/><path d="M8 1v14M1.500 7h13" stroke="#25333a" stroke-width="1.3"/><circle cx="12" cy="12" r="4" fill="#1f9e5a"/><path d="M10 12l1.500 1.500L14 11" fill="none" stroke="#fff"/></svg>
      <svg viewBox="0 0 16 16"><path d="M4 4.500V2.500h11.500v9H6M10 11.500v3M6.500 14.500h7M.5 1.500h4v3h-4zM2.500 4.500v9h2" fill="none" stroke="#fff" stroke-width="1.1"/></svg>
      <svg viewBox="0 0 16 16"><path d="M.5 6h2.500l3-3v10l-3-3H.5zM8 6q1.500 2 0 4M10.500 4q3 4 0 8M13 2q4.500 6 0 12" fill="none" stroke="#fff" stroke-width="1.1"/></svg>
      <span class="ime">中</span>
      <span class="sogou">S</span>
      <time><span>3:02</span><span>2023-12-24</span></time>
      <svg class="notice" viewBox="0 0 16 16"><path d="M10 12.500H6.500L4 15v-2.500H1v-11h14V9" fill="none" stroke="#fff" stroke-width="1.2"/><path fill="#fff" d="M14.500 9.500a3 3 0 1 1-3.500 4.500 3.500 3.500 0 0 0 3.500-4.500z"/></svg>
    </div>
  </footer>

  <svg class="cursor" viewBox="0 0 14 20"><path d="M1 1v16l4-3.500L7.500 19l2.500-1-2.400-5.500H13z" fill="#fff" stroke="#000"/></svg>
</body>
</html>
```
FILE: styles.css
```css
* { box-sizing: border-box; }
html, body { height: 100%; }
body {
  margin: 0;
  display: flex;
  flex-direction: column;
  font-family: Inter, "Noto Sans CJK SC", sans-serif;
  font-size: 14px;
  line-height: 20px;
  color: #333238;
  background: #fff;
  overflow: hidden;
}
h1, h2, h4, p, ul { margin: 0; padding: 0; }
ul { list-style: none; }
a { color: #1f75cb; text-decoration: none; }
button { font: inherit; color: inherit; border: 0; background: none; padding: 0; margin: 0; display: inline-flex; align-items: center; justify-content: center; }
svg { flex: none; }
.sprite { position: absolute; width: 0; height: 0; }
.icon { width: 16px; height: 16px; fill: none; stroke: currentColor; stroke-width: 1.5; }

/* browser */
.browser { font-family: "Open Sans", "Noto Sans CJK SC", sans-serif; font-size: 12px; line-height: 16px; color: #3c4043; background: #d3e3fd; border-bottom: 1px solid #dcdcdc; }
.tabstrip { display: flex; align-items: center; height: 40px; padding-left: 6px; }
.tab-search { width: 28px; height: 28px; margin-right: 4px; border-radius: 9px; background: #ebf2fe; }
.tab-search svg { width: 14px; height: 14px; }
.tab { flex: 0 1 151px; min-width: 0; height: 34px; margin-top: 6px; padding: 0 12px 6px 10px; display: flex; align-items: center; position: relative; }
.tab::after { content: ""; position: absolute; right: 0; top: 6px; width: 2px; height: 16px; background: #a8c7fa; }
.tab.no-sep::after { display: none; }
.tab.active { background: #fff; border-radius: 10px 10px 0 0; color: #1f1f1f; }
.tab.active::before, .tab.active::after { content: ""; position: absolute; top: auto; bottom: 0; width: 10px; height: 10px; }
.tab.active::before { left: -10px; background: radial-gradient(circle at 0 0, transparent 10px, #fff 10px); }
.tab.active::after { right: -10px; background: radial-gradient(circle at 100% 0, transparent 10px, #fff 10px); }
.favicon { width: 16px; height: 16px; margin-right: 8px; flex: none; }
.glyph-wei { font-size: 15px; font-weight: bold; color: #222; }
.tab-title { flex: 1; min-width: 0; overflow: hidden; white-space: nowrap; -webkit-mask-image: linear-gradient(to right, #000 72%, transparent); mask-image: linear-gradient(to right, #000 72%, transparent); }
.tab-close { width: 16px; height: 16px; margin-left: 2px; }
.tab-close svg, .new-tab svg { width: 16px; height: 16px; }
.new-tab { width: 28px; height: 28px; margin-left: 2px; }
.window-controls { margin-left: auto; display: flex; }
.window-controls button { width: 46px; height: 40px; }
.window-controls svg { width: 11px; height: 11px; fill: none; stroke: #000; }

.toolbar { display: flex; align-items: center; height: 46px; padding: 0 14px 0 4px; background: #fff; border-radius: 10px 10px 0 0; }
.tool { width: 36px; height: 36px; }
.tool svg, .star { width: 16px; height: 16px; fill: none; stroke: #474747; stroke-width: 1.7; }
.tool svg.muted { stroke: #ababab; }
.omnibox { flex: 1; display: flex; align-items: center; height: 34px; margin-left: 9px; padding: 0 16px 0 5px; border-radius: 17px; background: #ebeef8; }
.chip { height: 24px; padding: 0 9px 0 7px; gap: 6px; border-radius: 12px; background: #fff; color: #b3261e; }
.chip svg { width: 12px; height: 12px; }
.url { flex: 1; margin-left: 9px; font-family: "Noto Sans", "Noto Sans CJK SC", sans-serif; font-size: 14px; color: #474747; }
.url s { color: #b3261e; }
.host { color: #1f1f1f; }
.extensions { display: flex; align-items: center; gap: 20px; margin-left: 18px; }
.extensions svg { width: 16px; height: 16px; }
.extensions .line { fill: none; stroke: #474747; stroke-width: 1.7; }
.ext-sep { width: 2px; height: 16px; margin: 0 -2px; background: #d3e3fd; }
.profile { width: 20px; height: 20px; margin: 0 -2px; border-radius: 50%; background: #0a84d0; color: #fff; font-size: 8px; line-height: 20px; text-align: center; }

.bookmarks { display: flex; align-items: center; gap: 22px; height: 34px; padding: 0 24px 4px 12px; white-space: nowrap; background: #fff; }
.bookmarks a { display: flex; align-items: center; color: #3c4043; }
.bm-icon { width: 16px; height: 16px; margin-right: 8px; flex: none; text-align: center; }
.baidu { background: #1b84f5; color: #fff; border-radius: 2px; margin-right: 6px; line-height: 15px; }
.csdn { background: #fc5531; color: #fff; font-size: 14px; font-weight: bold; line-height: 16px; margin-right: 6px; }
.more { margin-left: auto; }
.more svg { width: 16px; height: 16px; }

/* page */
.page { flex: 1; min-height: 0; display: flex; }
.sidebar { width: 256px; flex: none; display: flex; flex-direction: column; background: #fbfafd; border-right: 1px solid #ececef; }
.super-top { padding: 0 8px 8px; background: #f0f0f2; }
.user-bar { display: flex; align-items: center; height: 48px; padding: 0 4px; color: #737278; }
.logo { margin-right: auto; height: 24px; }
.logo svg { width: 25px; height: 24px; }
.user-bar button { width: 34px; height: 24px; }
.user-bar .avatar { width: 24px; margin-left: 5px; border-radius: 50%; background: #fff; border: 1px solid #dcdcde; overflow: hidden; }
.avatar svg { width: 24px; height: 24px; }
.counters { display: flex; gap: 4px; }
.counters button { flex: 1; height: 32px; color: #737278; }
.counters button, .search { background: #fbfafd; border: 1px solid #e9e9ed; border-radius: 4px; }
.search { width: 100%; height: 32px; margin-top: 8px; gap: 4px; }
.search svg { color: #737278; }

.side-nav { flex: 1; padding: 0 4px; }
.side-nav h2 { font-size: 12px; line-height: 32px; padding-left: 12px; font-weight: 600; }
.row { display: flex; align-items: center; height: 32px; padding: 0 8px 0 12px; color: #333238; border-radius: 4px; }
.row > svg:first-child { margin-right: 12px; color: #737278; }
.row .arrow { margin-left: auto; color: #89888d; }
.row .down { transform: rotate(90deg); }
.project { margin-top: 2px; padding-left: 8px; }
.letter { width: 24px; height: 24px; margin-right: 8px; border-radius: 4px; border: 1px solid #eadfcb; background: #fdf1dd; font-size: 16px; line-height: 22px; text-align: center; color: #4d3a1a; }
.pinned { margin: 3px 0 4px; }
.pins .row { padding-left: 40px; margin-bottom: 2px; }
.pins li:last-child .row { margin-bottom: 0; }
.row.current { background: #e8e7ed; position: relative; }
.row.current::before { content: ""; position: absolute; left: 4px; top: 4px; bottom: 4px; width: 3px; border-radius: 2px; background: #1f75cb; }
.badge { width: 24px; height: 16px; margin-left: auto; border-radius: 8px; background: #dcdcde; color: #626168; font-size: 12px; line-height: 16px; text-align: center; }
.sections { padding-top: 4px; }
.sections::before { content: ""; display: block; height: 1px; margin: -1px 8px 5px 12px; background: #ececef; }
.sections li + li { margin-top: 4px; }
.side-footer { display: flex; justify-content: space-between; align-items: center; padding: 8px 8px 8px 16px; }
.help { gap: 4px; position: relative; }
.dot { position: absolute; left: 12px; top: 1px; width: 5px; height: 5px; border-radius: 50%; background: #1f75cb; }
.side-footer svg { color: #737278; }
.admin { height: 24px; padding: 0 7px; gap: 4px; background: #fff; border: 1px solid #bfbfc3; border-radius: 4px; }

.content { flex: 1; min-width: 0; }
.breadcrumbs { display: flex; align-items: center; gap: 8px; height: 48px; padding: 0 24px; border-bottom: 1px solid #dcdcde; font-size: 12px; }
.breadcrumbs a { color: #626168; }
.breadcrumbs span { color: #bfbfc3; }
.breadcrumbs .here { color: #333238; font-weight: 600; }
.container { max-width: 990px; margin: 0 auto; padding: 14px 16px 0; }
h1 { font-size: 20px; line-height: 24px; font-weight: 600; margin-bottom: 14px; }
.intro { margin-bottom: 14px; }
.field { display: grid; grid-template-columns: 16px 1fr; column-gap: 8px; row-gap: 7px; align-items: center; margin-bottom: 14px; }
.field label { font-weight: 600; }
.field p { grid-column: 2; }
.field input { appearance: none; width: 16px; height: 16px; margin: 0; border: 1px solid #89888d; border-radius: 4px; background: #fff; }
.field input:disabled { background: #ececef; border-color: #dcdcde; }
.field input:disabled + label { color: #89888d; }
form .btn { margin-top: 2px; }
hr { margin: 24px 0; border: 0; height: 1px; background: #ececef; }

.btn { height: 32px; padding: 0 12px; border-radius: 4px; color: #fff; }
.confirm { background: #1f75cb; box-shadow: inset 0 0 0 1px #1068bf; }
.danger { background: #dd2b0e; box-shadow: inset 0 0 0 1px #c91c00; }
.outline { background: #fff; color: #1068bf; box-shadow: inset 0 0 0 1px #1068bf; }
.small { height: 24px; padding: 0 8px; }

.card { margin-bottom: 16px; border: 1px solid #dcdcde; border-radius: 4px; line-height: 21px; }
.card-header { display: flex; align-items: center; justify-content: space-between; padding: 16px; background: #fbfafd; border-bottom: 1px solid #dcdcde; border-radius: 4px 4px 0 0; }
.card-body { padding: 16px; }
.card-body a .icon { vertical-align: text-bottom; }
.links p { margin-bottom: 16px; }
.domain { display: flex; align-items: center; height: 25px; border-bottom: 1px solid #dcdcde; }
.domain a { flex: 1; margin-left: 16px; }
.domain .small { margin-left: 8px; }
.failed { color: #dd2b0e; }
.warning { padding: 12px 20px; background: #fdf1dd; }
.warning a { color: #0b5cad; }
.remove { padding: 16px 24px 16px 21px; background: #fcf1ef; border-left: 3px solid #c91c00; }
.remove h4 { font-size: 16px; line-height: 20px; font-weight: 600; margin-bottom: 10px; }
.remove p { margin-bottom: 16px; }

.scrollbar { width: 17px; flex: none; display: flex; flex-direction: column; background: #f1f1f1; }
.scrollbar .up, .scrollbar .down { height: 17px; display: flex; align-items: center; justify-content: center; }
.scrollbar .up::before { content: ""; border: 4px solid transparent; border-top: 0; border-bottom-color: #a3a3a3; }
.scrollbar .down::before { content: ""; border: 4px solid transparent; border-bottom: 0; border-top-color: #505050; }
.thumb { flex: 1; margin: 0 2px 12px; background: #c1c1c1; }

/* taskbar */
.taskbar { display: flex; align-items: center; height: 40px; flex: none; padding-right: 4px; background: linear-gradient(to right, #22363f, #22333b 55%, #292d2d 72%, #1e2c33 85%, #1b2a31); color: #fff; font-family: "Open Sans", "Noto Sans CJK SC", sans-serif; font-size: 12px; }
.taskbar button { width: 48px; height: 40px; position: relative; }
.taskbar button svg { width: 24px; height: 24px; }
.taskbar .app { margin-right: 1px; }
.taskbar .first { margin-left: 3px; }
.open::after { content: ""; position: absolute; bottom: 0; left: 4px; right: 4px; height: 2px; background: #76b9ed; }
.stacked::after { background: linear-gradient(to right, #76b9ed 80%, #4a7ba3 80%); }
.focused { background: #50606a; }
.focused::after { left: 0; right: 0; }
.new { position: absolute; left: 19px; bottom: 7px; padding: 0 1px; background: #30d5e8; color: #123; font-size: 7px; font-weight: bold; line-height: 9px; border-radius: 1px; }
.count { position: absolute; left: 25px; top: 16px; width: 22px; height: 22px; border: 1px solid #aaa; border-radius: 50%; background: #26323a; font-size: 13px; font-weight: bold; line-height: 20px; text-align: center; }
.tray { height: 40px; margin-left: auto; display: flex; align-items: center; gap: 8px; padding-right: 19px; border-right: 1px solid #6f7a80; }
.tray svg { width: 16px; height: 16px; }
.tray .weather { position: relative; height: 24px; margin-right: 17px; }
.tray .weather svg { width: 24px; height: 24px; }
.weather b { position: absolute; right: -1px; top: -1px; width: 12px; height: 12px; border-radius: 50%; background: #c42b1c; font-size: 9px; line-height: 12px; text-align: center; font-weight: normal; }
.onedrive { fill: #1490df; }
.offline { fill: #d5d5d5; }
.ime { width: 16px; font-size: 15px; text-align: center; }
.sogou { width: 16px; height: 16px; margin-left: 4px; border-radius: 3px; background: #f4511e; font-weight: bold; font-size: 15px; line-height: 16px; text-align: center; }
time { display: flex; flex-direction: column; width: 84px; text-align: center; line-height: 18px; }
.tray .notice { width: 18px; height: 18px; margin-left: 1px; }

.cursor { position: absolute; left: 471px; top: 645px; width: 13px; height: 20px; }
```
